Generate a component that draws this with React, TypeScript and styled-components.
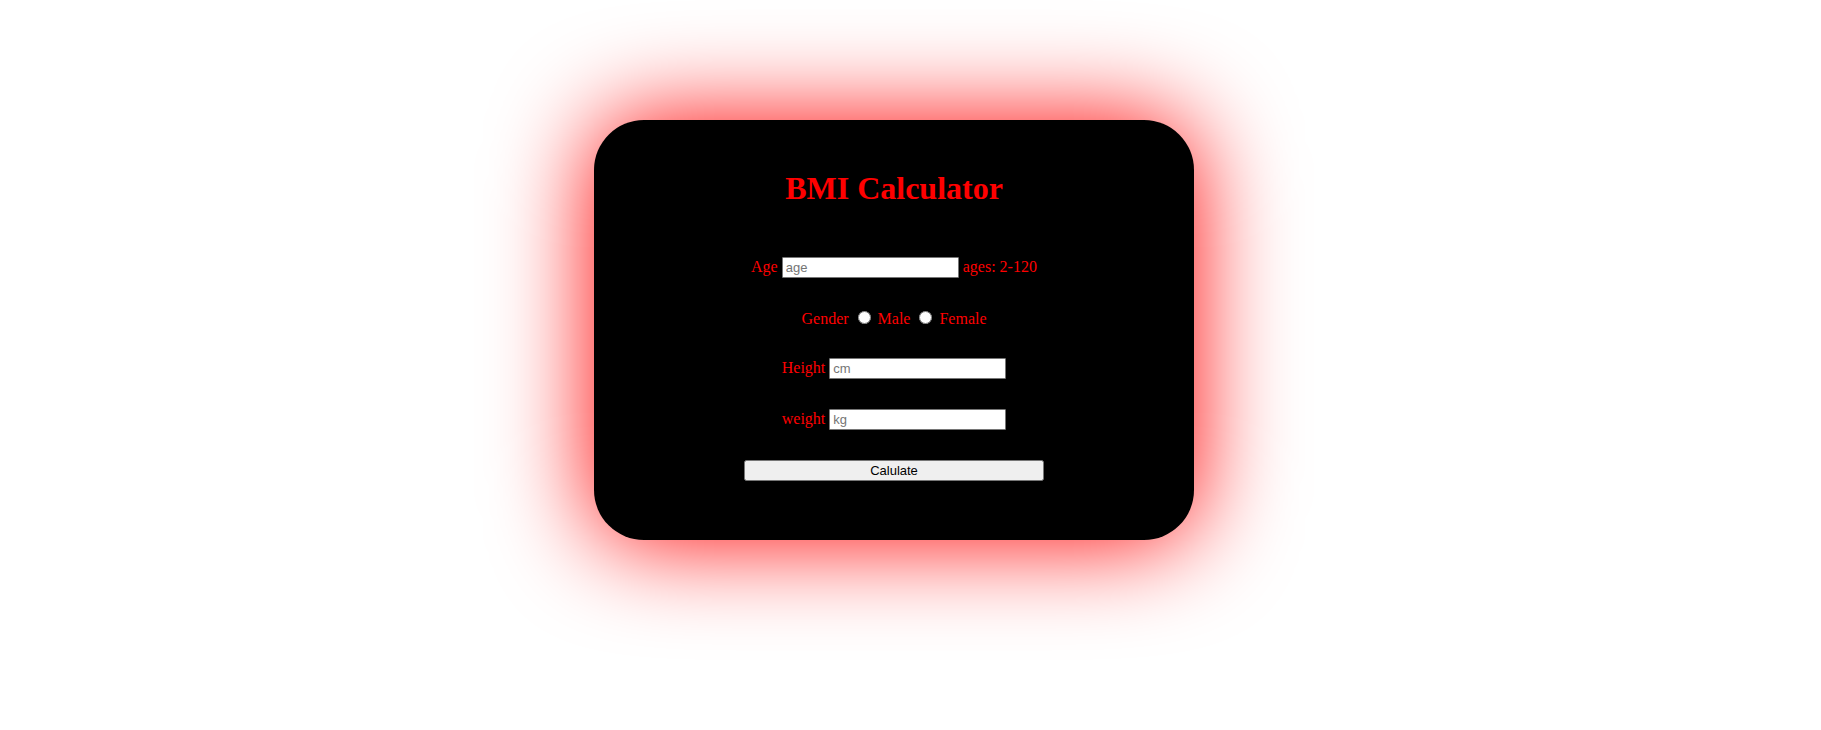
import React from "react";
import styled, { createGlobalStyle } from "styled-components";

const GlobalStyle = createGlobalStyle`
  body {
    margin: 0;
    background: #ffffff;
    font-family: "Liberation Serif", "Times New Roman", serif;
    font-size: 16px;
    line-height: 18px;
  }
`;

const Page = styled.main`
  display: flex;
  justify-content: center;
  padding: 120px 41px 120px 8px;
`;

const Card = styled.form`
  box-sizing: border-box;
  width: 600px;
  padding: 50px 0 59px;
  border-radius: 50px;
  background: #000000;
  color: #ff0000;
  box-shadow: 0 0 100px #ff0000;
  display: flex;
  flex-direction: column;
  align-items: center;
`;

const Title = styled.h1`
  margin: 0 0 50px;
  font-size: 32px;
  line-height: 37px;
`;

const Row = styled.div`
  display: flex;
  align-items: baseline;
  gap: 4px;
  margin-bottom: 30px;
`;

const Field = styled.input`
  box-sizing: border-box;
  width: 177px;
  height: 21px;
  padding: 2px 3px;
  border: 1px solid #767676;
  border-radius: 1px;
  font-family: "Liberation Sans", Arial, sans-serif;
  font-size: 13px;
`;

const Radio = styled.input`
  width: 13px;
  height: 13px;
  margin: 3px 3px 0 5px;
`;

const Submit = styled.button`
  width: 300px;
  height: 21px;
  padding: 1px 6px;
  font-family: "Liberation Sans", Arial, sans-serif;
  font-size: 13px;
`;

export default function App() {
  return (
    <>
      <GlobalStyle />
      <Page>
        <Card onSubmit={(e) => e.preventDefault()}>
          <Title>BMI Calculator</Title>
          <Row>
            <label htmlFor="age">Age</label>
            <Field id="age" type="text" placeholder="age" />
            <span>ages: 2-120</span>
          </Row>
          <Row role="radiogroup" aria-labelledby="gender">
            <span id="gender">Gender</span>
            <Radio id="male" type="radio" name="gender" />
            <label htmlFor="male">Male</label>
            <Radio id="female" type="radio" name="gender" />
            <label htmlFor="female">Female</label>
          </Row>
          <Row>
            <label htmlFor="height">Height</label>
            <Field id="height" type="text" placeholder="cm" />
          </Row>
          <Row>
            <label htmlFor="weight">weight</label>
            <Field id="weight" type="text" placeholder="kg" />
          </Row>
          <Submit type="submit">Calulate</Submit>
        </Card>
      </Page>
    </>
  );
}
